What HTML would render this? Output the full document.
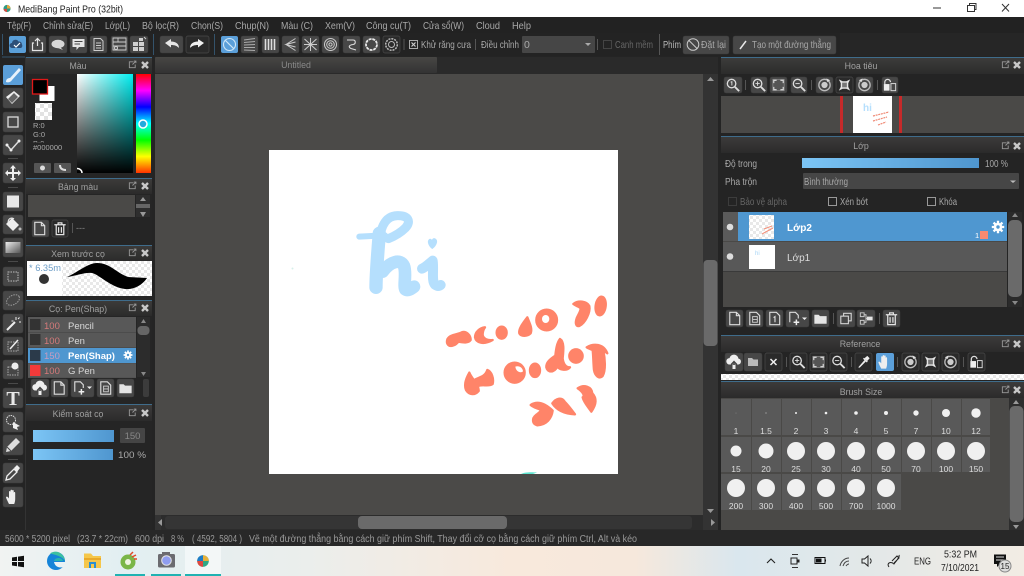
<!DOCTYPE html>
<html lang="vi"><head><meta charset="utf-8"><title>MediBang Paint Pro</title>
<style>
html,body{margin:0;padding:0;background:#222;width:1024px;height:576px;overflow:hidden}
svg{display:block;position:absolute;left:0;top:0;filter:blur(.35px)}
text{font-family:"Liberation Sans",sans-serif;font-size:9.5px;fill:#aaa}
.m{font-size:10.5px;fill:#a8a8a8}
.c{text-anchor:middle}
.h{font-size:8.8px;fill:#a0a0a0;text-anchor:middle}
.s{font-size:9.8px;fill:#9a9a9a}
.l{font-size:8.5px;fill:#ddd;text-anchor:middle}
.b{fill:#474747;stroke:#3a3a3a;stroke-width:.5}
.d{fill:#2a2a2a;stroke:#4a4a4a;stroke-width:.7}
.sep{stroke:#555;stroke-width:1}
.r{font-size:9.5px;fill:#c86f6f}
.n{font-size:9.5px;fill:#d8d8d8}
.k{fill:#222;font-size:9.5px}
</style></head><body>
<svg width="1024" height="576" viewBox="0 0 1024 576" xmlns="http://www.w3.org/2000/svg">
<defs>
<linearGradient id="hd" x1="0" y1="0" x2="0" y2="1"><stop offset="0" stop-color="#3c3b3a"/><stop offset="1" stop-color="#2b2b2b"/></linearGradient>
<linearGradient id="sl" x1="0" y1="0" x2="1" y2="0"><stop offset="0" stop-color="#7cc5f5"/><stop offset="1" stop-color="#4f96cf"/></linearGradient>
<linearGradient id="tab" x1="0" y1="0" x2="0" y2="1"><stop offset="0" stop-color="#474644"/><stop offset="1" stop-color="#333"/></linearGradient>
<linearGradient id="cs" x1="0" y1="0" x2="1" y2="0"><stop offset="0" stop-color="#fff"/><stop offset="1" stop-color="#00eef0"/></linearGradient>
<linearGradient id="cb" x1="0" y1="0" x2="0" y2="1"><stop offset="0" stop-color="#000" stop-opacity="0"/><stop offset="1" stop-color="#000"/></linearGradient>
<linearGradient id="hue" x1="0" y1="0" x2="0" y2="1"><stop offset="0" stop-color="#f00"/><stop offset=".167" stop-color="#f0f"/><stop offset=".333" stop-color="#00f"/><stop offset=".5" stop-color="#0ff"/><stop offset=".667" stop-color="#0f0"/><stop offset=".833" stop-color="#ff0"/><stop offset="1" stop-color="#f30"/></linearGradient>
<linearGradient id="tb" x1="0" y1="0" x2="1" y2="0"><stop offset="0" stop-color="#f1f3f2"/><stop offset=".12" stop-color="#e2eff2"/><stop offset=".3" stop-color="#ebeeec"/><stop offset=".5" stop-color="#f8e9dc"/><stop offset=".62" stop-color="#f6e8dc"/><stop offset=".72" stop-color="#dae7ee"/><stop offset=".85" stop-color="#e3e8e8"/><stop offset="1" stop-color="#f2ece4"/></linearGradient>
<linearGradient id="gr" x1="0" y1="0" x2="1" y2="1"><stop offset="0" stop-color="#eee"/><stop offset="1" stop-color="#555"/></linearGradient>
<pattern id="ck" width="8" height="8" patternUnits="userSpaceOnUse"><rect width="8" height="8" fill="#fff"/><rect width="4" height="4" fill="#e2e2e2"/><rect x="4" y="4" width="4" height="4" fill="#e2e2e2"/></pattern>
<pattern id="ck2" width="6" height="6" patternUnits="userSpaceOnUse"><rect width="6" height="6" fill="#fff"/><rect width="3" height="3" fill="#e8e8e8"/><rect x="3" y="3" width="3" height="3" fill="#e8e8e8"/></pattern>

<symbol id="pop" viewBox="0 0 10 10"><path d="M6 2H1.5V8.5H8V5M5 5L8.5 1.5M6.5 1.2H8.8V3.5" fill="none" stroke="#999" stroke-width="1"/></symbol>
<symbol id="x" viewBox="0 0 10 10"><path d="M2 2L8 8M8 2L2 8" stroke="#c8c8c8" stroke-width="2.4"/></symbol>
<symbol id="gear" viewBox="0 0 18 18"><path d="M9 1v16M1 9h16M3.3 3.3l11.4 11.4M14.7 3.3L3.3 14.7" stroke="#fff" stroke-width="3"/><circle cx="9" cy="9" r="5.5" fill="#fff"/><circle cx="9" cy="9" r="2.2" fill="#4f97d0"/></symbol>
<symbol id="new" viewBox="0 0 18 18"><path d="M4 2.5H11L14.5 6V15.5H4z M11 2.5V6H14.5" fill="none" stroke="#ddd" stroke-width="1.2"/></symbol>
<symbol id="new8" viewBox="0 0 18 18"><path d="M4 2.5H11L14.5 6V15.5H4z" fill="none" stroke="#ddd" stroke-width="1.2"/><rect x="7" y="7" width="5" height="6" fill="none" stroke="#ccc" stroke-width="1"/><path d="M7 10h5" stroke="#ccc"/></symbol>
<symbol id="new1" viewBox="0 0 18 18"><path d="M4 2.5H11L14.5 6V15.5H4z" fill="none" stroke="#ddd" stroke-width="1.2"/><path d="M8 8L9.5 7V13" fill="none" stroke="#ddd" stroke-width="1.2"/></symbol>
<symbol id="newp" viewBox="0 0 18 18"><path d="M4 13V2.5H10L13 5.5V9" fill="none" stroke="#ddd" stroke-width="1.2"/><path d="M11 10V16M8 13H14" stroke="#eee" stroke-width="1.6"/></symbol>
<symbol id="dir" viewBox="0 0 18 18"><path d="M2.5 5H7L8.5 6.5H15.5V14.5H2.5z" fill="#e4e4e4"/></symbol>
<symbol id="tr" viewBox="0 0 18 18"><path d="M3 5H15M7 5V3H11V5M5 5V15.5H13V5M7.5 7.5V13.5M10.5 7.5V13.5" fill="none" stroke="#e4e4e4" stroke-width="1.3"/></symbol>
<symbol id="dup" viewBox="0 0 18 18"><rect x="6.5" y="3.5" width="8" height="8" fill="none" stroke="#ddd" stroke-width="1.1"/><rect x="3.5" y="6.5" width="8" height="8" fill="#474747" stroke="#ddd" stroke-width="1.1"/></symbol>
<symbol id="mrg" viewBox="0 0 18 18"><path d="M3 3h4v4H3zM3 11h4v4H3z" fill="none" stroke="#ccc"/><path d="M7 5h2v8H7M9 9h1" fill="none" stroke="#ccc"/><rect x="10" y="7" width="6" height="4" fill="#e4e4e4"/></symbol>
<symbol id="cloudup" viewBox="0 0 18 18"><path d="M4.5 11.5a3.2 3.2 0 0 1 0-6.4 4.6 4.6 0 0 1 9 .5 3 3 0 0 1 0 5.9z" fill="#eee"/><path d="M9 16V9M6.2 11.5L9 8.5 11.8 11.5" fill="none" stroke="#444" stroke-width="1.4"/><path d="M7.5 12h3v4h-3z" fill="#eee"/></symbol>
<symbol id="zi" viewBox="0 0 18 18"><circle cx="7.5" cy="7.5" r="4.5" fill="none" stroke="#ddd" stroke-width="1.4"/><path d="M11 11L15.5 15.5" stroke="#ddd" stroke-width="2"/><path d="M5.2 7.5h4.6M7.5 5.2v4.6" stroke="#ddd"/></symbol>
<symbol id="zo" viewBox="0 0 18 18"><circle cx="7.5" cy="7.5" r="4.5" fill="none" stroke="#ddd" stroke-width="1.4"/><path d="M11 11L15.5 15.5" stroke="#ddd" stroke-width="2"/><path d="M5.2 7.5h4.6" stroke="#ddd"/></symbol>
<symbol id="z1" viewBox="0 0 18 18"><circle cx="7.5" cy="7.5" r="4.5" fill="none" stroke="#ddd" stroke-width="1.4"/><path d="M11 11L15.5 15.5" stroke="#ddd" stroke-width="2"/><path d="M6.5 6L7.8 5.5V9.5" fill="none" stroke="#ddd"/></symbol>
<symbol id="fit" viewBox="0 0 18 18"><rect x="3" y="3" width="12" height="12" fill="#555" stroke="#888" stroke-width=".8"/><path d="M4 7V4H7M11 4H14V7M14 11V14H11M7 14H4V11" fill="none" stroke="#ddd" stroke-width="1.2"/></symbol>
<symbol id="fit2" viewBox="0 0 18 18"><path d="M3 3L7 5H11L15 3L13 7V11L15 15L11 13H7L3 15L5 11V7z" fill="#e4e4e4"/><rect x="6.5" y="6.5" width="5" height="5" fill="#777"/></symbol>
<symbol id="rl" viewBox="0 0 18 18"><circle cx="9" cy="9" r="6" fill="none" stroke="#bbb" stroke-width="1.4"/><circle cx="9" cy="9" r="3.3" fill="#ccc"/><path d="M11 2L15 4 12 6" fill="#ddd"/></symbol>
<symbol id="rr" viewBox="0 0 18 18"><circle cx="9" cy="9" r="6" fill="none" stroke="#bbb" stroke-width="1.4"/><circle cx="9" cy="9" r="3.3" fill="#ccc"/><path d="M7 2L3 4 6 6" fill="#ddd"/></symbol>
<symbol id="lock" viewBox="0 0 18 18"><path d="M3.5 8V6a3 3 0 0 1 6 0" fill="none" stroke="#ddd" stroke-width="1.3"/><rect x="2.5" y="8" width="6" height="7" fill="#eee"/><rect x="10" y="7.5" width="5" height="7.5" fill="none" stroke="#ddd"/></symbol>
<symbol id="drop" viewBox="0 0 18 18"><path d="M4 15L3.5 14.5 10 7 11.5 8.5 5 15z" fill="#eee"/><path d="M10 5L13 2.5 15.5 5 13 8z" fill="#eee"/><path d="M9 5L13 9" stroke="#eee" stroke-width="1.4"/></symbol>
<symbol id="hand" viewBox="0 0 18 18"><path d="M5 16C3 12 2 10 2 9c1-1 2 0 3 1.5V4c0-1.4 1.5-1.4 1.5 0V8V2.7c0-1.3 1.6-1.3 1.6 0V8V3c0-1.3 1.6-1.3 1.6 0V8.5V5c0-1.3 1.5-1.3 1.5 0V11c0 2-.5 3.5-1 5z" fill="#eee"/></symbol>
</defs>

<!-- base -->
<rect width="1024" height="576" fill="#242424"/>
<rect width="1024" height="17" fill="#fff"/>
<rect y="17" width="1024" height="16" fill="#222"/>
<rect y="33" width="1024" height="23" fill="#262626"/>
<rect x="0" y="33" width="840" height="23" fill="#232323"/>

<!-- title bar -->
<circle cx="7" cy="8.5" r="3.6" fill="#2f9b86"/><path d="M7 5a3.6 3.6 0 0 1 3.5 3.5H7z" fill="#e9a63a"/><path d="M3.5 9A3.6 3.6 0 0 0 7 12V9z" fill="#d9483f"/>
<text x="18" y="12.5" class="k" style="font-size:10.5px" textLength="105" lengthAdjust="spacingAndGlyphs">MediBang Paint Pro (32bit)</text>
<path d="M933 8H941" stroke="#333"/>
<path d="M967.5 5.5H974.5V11.5H967.5zM969.5 5.5V3.5H976V9.5H974.5" fill="none" stroke="#333"/>
<path d="M1002 4L1009 11.5M1009 4L1002 11.5" stroke="#333"/>

<!-- menu -->
<text class="m" x="7" y="29" textLength="24" lengthAdjust="spacingAndGlyphs">Tệp(F)</text>
<text class="m" x="43" y="29" textLength="50" lengthAdjust="spacingAndGlyphs">Chỉnh sửa(E)</text>
<text class="m" x="105" y="29" textLength="25" lengthAdjust="spacingAndGlyphs">Lớp(L)</text>
<text class="m" x="142" y="29" textLength="37" lengthAdjust="spacingAndGlyphs">Bộ lọc(R)</text>
<text class="m" x="191" y="29" textLength="32" lengthAdjust="spacingAndGlyphs">Chọn(S)</text>
<text class="m" x="235" y="29" textLength="34" lengthAdjust="spacingAndGlyphs">Chụp(N)</text>
<text class="m" x="281" y="29" textLength="32" lengthAdjust="spacingAndGlyphs">Màu (C)</text>
<text class="m" x="325" y="29" textLength="30" lengthAdjust="spacingAndGlyphs">Xem(V)</text>
<text class="m" x="366" y="29" textLength="45" lengthAdjust="spacingAndGlyphs">Công cụ(T)</text>
<text class="m" x="423" y="29" textLength="41" lengthAdjust="spacingAndGlyphs">Cửa sổ(W)</text>
<text class="m" x="476" y="29" textLength="24" lengthAdjust="spacingAndGlyphs">Cloud</text>
<text class="m" x="512" y="29" textLength="19" lengthAdjust="spacingAndGlyphs">Help</text>

<!-- toolbar -->
<path d="M2.5 34V55M153.5 34V55M214.5 34V55" stroke="#34536b"/>
<rect x="9" y="36" width="17" height="17" rx="2" fill="#5a9fd8"/>
<path d="M12 48a2.5 2.5 0 0 1 0-5 3.5 3.5 0 0 1 6.5-1.5 3 3 0 0 1 3.5 3 2.5 2.5 0 0 1-1 3.5z" fill="#2d4f78"/><path d="M14 45l2 2 4-4" fill="none" stroke="#fff" stroke-width="1.2"/>
<rect class="b" x="29" y="36" width="17" height="17" rx="2"/><path d="M34 43H32.5V50.5H42.5V43H41M37.5 46V39M35 41L37.5 38.5 40 41" fill="none" stroke="#e4e4e4" stroke-width="1.2"/>
<rect class="b" x="49" y="36" width="18" height="17" rx="2"/><ellipse cx="58" cy="44" rx="6.5" ry="4.2" fill="#d8d8d8"/><path d="M60 47L63 50 58 48z" fill="#d8d8d8"/>
<rect class="b" x="70" y="36" width="17" height="17" rx="2"/><path d="M72.5 39H84.5V47H79L76.5 50V47H72.5z" fill="#e4e4e4"/><path d="M74.5 41.5H82.5M74.5 44H80" stroke="#444"/>
<rect class="b" x="90" y="36" width="17" height="17" rx="2"/><path d="M94 38.5H100.5L103 41V50.5H94zM96 43H101M96 45.5H101M96 48H101" fill="none" stroke="#ccc"/>
<rect class="b" x="111" y="36" width="17" height="17" rx="2"/><path d="M113 38H126V50H113zM113 42H126M113 46H126M118 38V42" fill="none" stroke="#ccc" stroke-width=".9"/><circle cx="116" cy="48" r="1.5" fill="none" stroke="#ccc"/>
<rect class="b" x="130" y="36" width="18" height="17" rx="2"/><path d="M133 42H138V46H133zM139 42H144V46H139zM133 47H138V51H133zM139 47H144V51H139zM139 38H143V41H139z" fill="#d0d0d0"/><path d="M144 37L146 39" stroke="#ccc"/>
<rect class="b" x="160" y="36" width="23" height="17" rx="2"/><path d="M165 43L171 39V41.5C176 41.5 179 44 179 48C177 46 175 45 171 45V47.5z" fill="#e6e6e6"/>
<rect class="d" x="186" y="36" width="23" height="17" rx="2"/><path d="M204 43L198 39V41.5C193 41.5 190 44 190 48C192 46 194 45 198 45V47.5z" fill="#f0f0f0"/>
<rect x="221" y="36" width="17" height="17" rx="2" fill="#5b9fd9"/><circle cx="229.5" cy="44.5" r="6" fill="none" stroke="#cfe6f7" stroke-width="1.1"/><path d="M225.3 40.3L233.7 48.7" stroke="#cfe6f7" stroke-width="1.1"/>
<rect class="b" x="241" y="36" width="17" height="17" rx="2"/><path d="M244 40L255 38.5M244 42.5L255 41.5M244 45L255 44.5M244 47.5L255 47.5M244 50L255 50.5" stroke="#aaa" stroke-width="1.1"/>
<rect class="b" x="262" y="36" width="17" height="17" rx="2"/><path d="M265.5 39V50M268.5 39V50M271.5 39V50M274.5 39V50" stroke="#ddd" stroke-width="1.6"/>
<rect class="b" x="282" y="36" width="17" height="17" rx="2"/><path d="M295.5 38.5L286 44.5 295.5 50.5M295.5 42L286 44.5 295.5 47" fill="none" stroke="#ccc"/>
<rect class="b" x="302" y="36" width="17" height="17" rx="2"/><path d="M304.5 39L316.5 50M316.5 39L304.5 50M310.5 38V51M304 44.5H317" stroke="#ccc"/>
<rect class="b" x="322" y="36" width="17" height="17" rx="2"/><circle cx="330.5" cy="44.5" r="6" fill="none" stroke="#ccc"/><circle cx="330.5" cy="44.5" r="3.8" fill="none" stroke="#ccc"/><circle cx="330.5" cy="44.5" r="1.6" fill="none" stroke="#ccc"/>
<rect class="b" x="343" y="36" width="17" height="17" rx="2"/><path d="M347 40H353C356 40 356 44 353 44.5C349 45 348 47 351 48.5L356 50" fill="none" stroke="#ddd" stroke-width="1.1"/>
<rect class="b" x="363" y="36" width="17" height="17" rx="2"/><circle cx="371.5" cy="44.5" r="5.5" fill="none" stroke="#e8e8e8" stroke-width="1.8" stroke-dasharray="3 .8"/>
<rect class="d" x="383" y="36" width="17" height="17" rx="2"/><circle cx="391.5" cy="44.5" r="5.8" fill="none" stroke="#bbb" stroke-width="1.5" stroke-dasharray="2 1"/><circle cx="391.5" cy="44.5" r="3" fill="none" stroke="#bbb"/>
<path class="sep" d="M404 39V50M475.5 39V50M597.5 39V50M659.5 34V55" />
<rect x="409.5" y="40.5" width="8" height="8" fill="none" stroke="#aaa"/><path d="M411.5 42.5L415.5 46.5M415.5 42.5L411.5 46.5" stroke="#ccc" stroke-width="1.2"/>
<text class="m" x="421" y="48" textLength="50" lengthAdjust="spacingAndGlyphs">Khử răng cưa</text>
<text class="m" x="481" y="48" textLength="38" lengthAdjust="spacingAndGlyphs">Điều chỉnh</text>
<rect x="522" y="36" width="73" height="17" rx="1" fill="#464646"/><text class="m" x="524" y="48">0</text><path d="M585 43H591L588 46z" fill="#aaa"/>
<rect x="603.5" y="40.5" width="8" height="8" fill="none" stroke="#444"/>
<text class="m" x="615" y="48" textLength="38" lengthAdjust="spacingAndGlyphs" style="fill:#666">Canh mềm</text>
<text class="m" x="663" y="48" textLength="18" lengthAdjust="spacingAndGlyphs" style="fill:#bbb">Phím</text>
<rect class="b" x="683" y="36" width="46" height="18" rx="2"/><circle cx="693" cy="44.5" r="5.8" fill="none" stroke="#ccc"/><path d="M689 40.5L697 48.5" stroke="#ccc"/>
<text class="m" x="701" y="48" textLength="25" lengthAdjust="spacingAndGlyphs">Đặt lại</text>
<rect class="b" x="733" y="36" width="103" height="18" rx="2"/><path d="M740 49L746 41" stroke="#e8e8e8" stroke-width="1.5"/>
<text class="m" x="752" y="48" textLength="79" lengthAdjust="spacingAndGlyphs">Tạo một đường thẳng</text>

<!-- left tools -->
<path d="M25.5 57V530" stroke="#333"/>
<path d="M2 57H25" stroke="#34536b"/>
<rect x="3" y="65" width="20" height="20" rx="2" fill="#5b9fd9"/><path d="M6 82C6 79 8 78 10 78L19 68 21 70 12 80C11 82 8 83 6 82z" fill="#e8f2fb"/>
<rect class="b" x="3" y="88" width="20" height="20" rx="2"/><path d="M6 97L14 91 20 96 12 104z" fill="#eee"/><path d="M8 99L12 103 18 97 14 93" fill="#666"/>
<rect class="b" x="3" y="112" width="20" height="20" rx="2"/><rect x="8" y="117" width="10" height="10" fill="none" stroke="#ddd" stroke-width="1.3"/>
<rect class="b" x="3" y="135" width="20" height="20" rx="2"/><path d="M7 145L11 150 19 141" fill="none" stroke="#ddd" stroke-width="1.5"/><circle cx="7" cy="145" r="1.5" fill="#eee"/><circle cx="19" cy="141" r="1.5" fill="#eee"/><circle cx="11" cy="150" r="1.5" fill="#eee"/>
<rect class="b" x="3" y="163" width="20" height="20" rx="2"/><path d="M13 165L16 168.5H14V172H18V170L21 173 18 176V174H14V178H16L13 181 10 178H12V174H8V176L5 173 8 170V172H12V168.5H10z" fill="#eee"/>
<path d="M8 158.5H18M8 187.5H18M8 261.5H18M8 383.5H18M8 459.5H18" stroke="#4a4a4a"/>
<rect class="b" x="3" y="192" width="20" height="19" rx="2"/><rect x="7" y="195.5" width="12" height="12" fill="#e8e8e8"/>
<rect class="b" x="3" y="215" width="20" height="19" rx="2"/><path d="M6 224L12 218 19 225 13 231z" fill="#eee"/><path d="M8 223C8 218 12 217 14 219" fill="none" stroke="#eee"/><circle cx="20" cy="229" r="1.5" fill="#bbb"/>
<rect class="b" x="3" y="238" width="20" height="19" rx="2"/><rect x="5.5" y="242" width="15" height="11" fill="url(#gr)"/>
<rect class="b" x="3" y="267" width="20" height="19" rx="2"/><rect x="8" y="272" width="10" height="9" fill="none" stroke="#bbb" stroke-dasharray="1.5 1"/>
<rect class="b" x="3" y="291" width="20" height="19" rx="2"/><ellipse cx="13" cy="300" rx="7" ry="4.5" transform="rotate(-30 13 300)" fill="none" stroke="#999" stroke-dasharray="1.5 1"/>
<rect class="b" x="3" y="314" width="20" height="19" rx="2"/><path d="M7 330L15 322" stroke="#eee" stroke-width="2"/><path d="M16 317V320M13.5 321H11.5M19 322H21M18 319L19.5 317.5" stroke="#eee"/>
<rect class="b" x="3" y="337" width="20" height="18" rx="2"/><rect x="8" y="342" width="10" height="9" fill="none" stroke="#aaa" stroke-dasharray="1.5 1"/><path d="M10 349L18 340" stroke="#eee" stroke-width="1.5"/>
<rect class="b" x="3" y="360" width="20" height="19" rx="2"/><rect x="8" y="367" width="10" height="8" fill="none" stroke="#aaa" stroke-dasharray="1.5 1"/><circle cx="15" cy="366" r="3.5" fill="#eee"/>
<rect class="b" x="3" y="388" width="20" height="20" rx="2"/><text x="13" y="405" class="c" style="font-family:'Liberation Serif',serif;font-weight:bold;font-size:20px;fill:#e8e8e8">T</text>
<rect class="b" x="3" y="412" width="20" height="20" rx="2"/><circle cx="11" cy="420" r="4.5" fill="none" stroke="#ddd" stroke-dasharray="1.5 .8"/><path d="M13 422L20 426 17 427 18 430 13 428z" fill="#eee"/>
<rect class="b" x="3" y="435" width="20" height="20" rx="2"/><path d="M6 452L7 447 16 438 20 442 11 451z" fill="#ddd"/><path d="M7 447L11 451" stroke="#444"/>
<rect class="b" x="3" y="463" width="20" height="20" rx="2"/><path d="M6 480L7 476 14 469 17 472 10 479z" fill="none" stroke="#eee" stroke-width="1.3"/><path d="M14 468L17 465 20 468 17 472z" fill="#eee"/>
<rect class="b" x="3" y="487" width="20" height="20" rx="2"/><use href="#hand" x="4" y="488" width="18" height="18"/>

<!-- left panels -->
<rect x="26" y="57" width="126" height="473" fill="#252525"/>
<path d="M26 57.5H152M26 178.5H152M26 245.5H152M26 300.5H152M26 404.5H152" stroke="#3f6c8b"/>
<rect x="26" y="58" width="126" height="16" fill="url(#hd)"/>
<rect x="26" y="179" width="126" height="15" fill="url(#hd)"/>
<rect x="26" y="246" width="126" height="15" fill="url(#hd)"/>
<rect x="26" y="301" width="126" height="15" fill="url(#hd)"/>
<rect x="26" y="405" width="126" height="16" fill="url(#hd)"/>
<text class="h" x="78" y="69">Màu</text>
<text class="h" x="78" y="190">Bảng màu</text>
<text class="h" x="78" y="257">Xem trước cọ</text>
<text class="h" x="78" y="312">Cọ: Pen(Shap)</text>
<text class="h" x="78" y="417">Kiểm soát cọ</text>
<use href="#pop" x="128" y="60" width="9" height="9"/><use href="#x" x="140" y="60" width="10" height="10"/>
<use href="#pop" x="128" y="181" width="9" height="9"/><use href="#x" x="140" y="181" width="10" height="10"/>
<use href="#pop" x="128" y="248" width="9" height="9"/><use href="#x" x="140" y="248" width="10" height="10"/>
<use href="#pop" x="128" y="303" width="9" height="9"/><use href="#x" x="140" y="303" width="10" height="10"/>
<use href="#pop" x="128" y="408" width="9" height="9"/><use href="#x" x="140" y="408" width="10" height="10"/>

<!-- colour -->
<rect x="39.5" y="86" width="15" height="15" fill="#fff"/>
<rect x="32.5" y="79.5" width="15" height="14.5" fill="#000" stroke="#e01818" stroke-width="1.3"/>
<rect x="35" y="103" width="17" height="17" fill="url(#ck)"/>
<text x="33" y="128" style="font-size:7.5px;fill:#aaa">R:0</text>
<text x="33" y="137" style="font-size:7.5px;fill:#aaa">G:0</text>
<text x="33" y="146" style="font-size:7.5px;fill:#aaa">B:0</text>
<rect x="30" y="142.5" width="44" height="8" fill="#252525"/>
<text x="33" y="150" style="font-size:7.5px;fill:#aaa">#000000</text>
<rect x="77" y="74" width="56" height="99" fill="url(#cs)"/><rect x="77" y="74" width="56" height="99" fill="url(#cb)"/>
<rect x="136" y="74" width="15" height="99" fill="url(#hue)"/>
<circle cx="143" cy="124" r="4" fill="#2ad" stroke="#fff" stroke-width="1.5"/>
<path d="M77 168.5C80 168.5 82 170.5 82 173" fill="none" stroke="#fff" stroke-width="1.5"/>
<rect x="34" y="163" width="17" height="10" rx="1" fill="#555"/><circle cx="42.5" cy="168" r="2.5" fill="#ddd"/>
<rect x="54" y="163" width="17" height="10" rx="1" fill="#555"/><path d="M60 165C60 169 63 170 66 170" fill="none" stroke="#ddd" stroke-width="2"/>

<!-- palette -->
<rect x="28" y="195" width="107" height="22" fill="#4a4947"/>
<rect x="136" y="195" width="14" height="22" fill="#2e2e2e"/><path d="M143 197L146 201H140zM143 217L146 212H140z" fill="#999"/><rect x="136" y="204" width="14" height="4" fill="#666"/>
<rect class="b" x="32" y="220" width="17" height="17" rx="2"/><use href="#new" x="31" y="220" width="17" height="17"/>
<rect class="d" x="52" y="220" width="16" height="17" rx="2"/><use href="#tr" x="51.5" y="220" width="17" height="17"/>
<path d="M72.5 223V233" stroke="#555"/><text x="76" y="231" style="font-size:9px;fill:#888">---</text>

<!-- preview -->
<rect x="27" y="261" width="125" height="35" fill="url(#ck2)"/>
<rect x="27" y="261" width="35" height="35" fill="#fff"/>
<text x="29" y="271" style="font-size:9px;fill:#6d9dc6" textLength="32" lengthAdjust="spacingAndGlyphs">* 6.35m</text>
<circle cx="44" cy="279" r="5" fill="#333"/>
<path d="M67 277C78 272 88 263 97 263C110 263 115 272 128 277L147 278C143 284 135 290 125 289C110 287 100 275 92 273C85 272 75 276 67 277z" fill="#000"/>

<!-- brushes -->
<rect x="28" y="317" width="108" height="61" fill="#4c4c4c"/>
<rect x="28" y="317" width="108" height="15" fill="#585858"/><rect x="28" y="333" width="108" height="14" fill="#585858"/>
<rect x="28" y="348" width="108" height="15" fill="#4f97d0"/><rect x="28" y="363.5" width="108" height="14" fill="#585858"/>
<rect x="30" y="319" width="10.5" height="11" fill="#333"/><rect x="30" y="334" width="10.5" height="11" fill="#333"/><rect x="30" y="350" width="10.5" height="11" fill="#2b3a4a"/><rect x="30" y="365" width="10.5" height="11" fill="#f23a3a"/>
<text class="r" x="44" y="329" style="fill:#d57a7a">100</text><text class="r" x="44" y="344" style="fill:#d57a7a">100</text><text class="r" x="44" y="359" style="fill:#c89cc0">150</text><text class="r" x="44" y="374" style="fill:#d57a7a">100</text>
<text class="n" x="68" y="329">Pencil</text><text class="n" x="68" y="344">Pen</text><text class="n" x="68" y="359" style="font-weight:bold;fill:#fff">Pen(Shap)</text><text class="n" x="68" y="374">G Pen</text>
<use href="#gear" x="123" y="350" width="10" height="10"/>
<rect x="137" y="317" width="13" height="60" fill="#2c2c2c"/><path d="M143.5 319L146 323H141z" fill="#888"/><rect x="137.5" y="326" width="12" height="9" rx="4" fill="#666"/><path d="M143.5 376L146 372H141z" fill="#888"/>
<rect class="b" x="31" y="379" width="18" height="18" rx="2"/><use href="#cloudup" x="31" y="379" width="18" height="18"/>
<rect class="b" x="51" y="379" width="17" height="18" rx="2"/><use href="#new" x="50.5" y="379.5" width="17" height="17"/>
<rect class="b" x="71" y="379" width="23" height="18" rx="2"/><use href="#newp" x="71" y="379.5" width="17" height="17"/><path d="M87 386.5H92L89.5 389z" fill="#eee"/>
<rect class="b" x="97" y="379" width="17" height="18" rx="2"/><use href="#new8" x="97" y="379.5" width="17" height="17"/>
<rect class="b" x="117" y="379" width="17" height="18" rx="2"/><use href="#dir" x="117" y="379.5" width="17" height="17"/>
<rect x="143" y="379" width="6" height="18" rx="2" fill="#3c3c3c"/>

<!-- control -->
<rect x="33" y="430" width="81" height="12" fill="url(#sl)"/>
<rect x="33" y="449" width="80" height="11" fill="url(#sl)"/>
<rect x="120" y="428" width="25" height="15" rx="1" fill="#454545"/><text x="132.5" y="439" class="c" style="fill:#888;font-size:9.5px">150</text>
<text x="118" y="458" style="fill:#aaa;font-size:9.5px" textLength="28" lengthAdjust="spacingAndGlyphs">100 %</text>

<!-- canvas area -->
<rect x="155" y="57" width="563" height="17" fill="#2a2a2a"/>
<rect x="155" y="57" width="282" height="16" rx="1" fill="url(#tab)"/>
<text x="296" y="68" class="h" style="fill:#8a8a8a">Untitled</text>
<rect x="155" y="74" width="548" height="441" fill="#4b4a48"/>
<rect x="703" y="74" width="15" height="441" fill="#333"/>
<path d="M710.5 77L714 81H707zM710.5 513L714 509H707z" fill="#999"/>
<rect x="703.5" y="260" width="14" height="86" rx="4" fill="#6a6a6a"/>
<rect x="155" y="515" width="563" height="15" fill="#2c2c2c"/><rect x="155" y="515" width="6" height="15" fill="#333"/>
<path d="M158 522.5L162 519V526z" fill="#999"/>
<rect x="165" y="516" width="527" height="13" rx="3" fill="#353535"/>
<rect x="358" y="516" width="149" height="13" rx="4" fill="#6a6a6a"/>
<rect x="703" y="515" width="15" height="15" fill="#333"/>
<path d="M715 522.5L711 519V526z" fill="#999"/>
<rect x="269" y="150" width="349" height="324" fill="#fff"/>

<!-- hi -->
<g transform="translate(340 190) scale(.3333)" fill="none" stroke="#b5dffd" stroke-linecap="round" stroke-linejoin="round">
<path d="M58 140L135 136" stroke-width="18"/>
<path d="M118 130C114 180 108 250 108 292" stroke-width="40"/>
<path d="M118 150C124 100 142 78 172 77C205 76 214 94 197 113C182 128 165 138 145 146" stroke-width="27"/>
<path d="M128 245C150 215 182 205 192 228C200 250 190 285 196 298C204 304 214 296 222 290" stroke-width="38"/>
<path d="M246 236C256 232 266 222 278 212C282 240 274 272 285 284C293 290 298 288 302 285" stroke-width="30"/>
<path d="M268 148C260 155 268 170 277 176C288 168 296 152 285 146C280 144 277 148 276 152C274 148 272 146 268 148z" fill="#b5dffd" stroke-width="2"/>
</g>
<circle cx="292.5" cy="268.5" r="1" fill="#d6f0ea"/>

<!-- writing -->
<g transform="translate(430 290) scale(.3333)" fill="#ff8469" stroke="#ff8469" stroke-width="7" stroke-linejoin="round">
<path d="M52 148C60 132 85 134 95 127C108 122 122 135 122 150C115 160 100 158 85 155C78 165 62 172 55 165C50 160 50 154 52 148z"/>
<path d="M165 112C150 114 135 125 135 142C138 158 160 166 188 150C172 152 160 146 158 135C158 125 160 118 165 112z"/>
<ellipse cx="215" cy="128" rx="15" ry="18"/>
<path d="M292 82C278 100 265 118 268 130C272 140 292 140 302 130C308 115 298 98 292 82z"/>
<circle cx="350" cy="90" r="31"/><ellipse cx="347" cy="87" rx="11" ry="12" fill="#fff" stroke="none"/>
<path d="M430 42C445 30 470 33 478 48C482 68 465 100 448 108C438 110 435 100 440 85C445 72 452 65 452 55C448 50 438 48 430 42z"/>
<ellipse cx="512" cy="48" rx="15" ry="28" transform="rotate(8 512 48)"/>
<path d="M118 248C124 265 148 285 146 303C135 316 118 316 108 300C102 285 108 265 118 248z"/>
<path d="M133 270C145 262 165 262 172 240C185 245 192 265 188 282C175 292 155 280 142 290C135 288 130 280 133 270z"/>
<circle cx="254" cy="248" r="30"/><path d="M256 230C266 226 278 232 279 244C272 250 258 246 256 230z" fill="#fff" stroke="none"/>
<ellipse cx="315" cy="241" rx="15" ry="20"/>
<path d="M390 147C404 155 400 185 398 205C400 222 408 232 420 232C408 245 388 238 382 230C372 250 352 248 349 232C348 215 365 205 376 197C378 180 380 160 390 147z"/>
<circle cx="438" cy="198" r="20"/>
<path d="M470 172C490 160 520 160 532 190C525 185 522 182 520 182C525 205 528 240 518 258C508 268 495 258 492 240C490 220 490 195 488 180C482 178 476 176 470 172z"/>
<path d="M302 345C325 330 350 345 368 362C365 385 350 405 322 406C306 402 305 385 318 375C328 368 335 362 330 358C320 355 310 352 302 345z"/>
<path d="M367 340C378 325 395 320 404 335C414 345 424 358 435 373C415 372 385 368 367 340z"/>
<path d="M443 295C462 282 485 290 487 310C498 322 502 340 484 365C474 350 462 338 458 322C466 318 458 305 443 295z"/>
</g>
<path d="M521 474C524 472 532 472 537 472.5L533 474z" fill="#5fe5d0"/>

<!-- navigator -->
<rect x="721" y="57" width="303" height="473" fill="#242424"/>
<path d="M721 57.5H1024M721 136.5H1024M721 335.5H1024M721 381.5H1024" stroke="#3f6c8b"/>
<rect x="721" y="58" width="303" height="16" fill="url(#hd)"/>
<rect x="721" y="137" width="303" height="16" fill="url(#hd)"/>
<rect x="721" y="336" width="303" height="16" fill="url(#hd)"/>
<rect x="721" y="382" width="303" height="16" fill="url(#hd)"/>
<text class="h" x="861" y="69">Hoa tiêu</text>
<text class="h" x="861" y="149">Lớp</text>
<text class="h" x="860" y="347">Reference</text>
<text class="h" x="861" y="395">Brush Size</text>
<use href="#pop" x="1001" y="60" width="9" height="9"/><use href="#x" x="1012" y="60" width="10" height="10"/>
<use href="#pop" x="1001" y="141" width="9" height="9"/><use href="#x" x="1012" y="141" width="10" height="10"/>
<use href="#pop" x="1001" y="339" width="9" height="9"/><use href="#x" x="1012" y="339" width="10" height="10"/>
<use href="#pop" x="1001" y="385" width="9" height="9"/><use href="#x" x="1012" y="385" width="10" height="10"/>
<rect class="b" x="724" y="77" width="18" height="16" rx="2"/><use href="#z1" x="724.5" y="76.5" width="17" height="17"/>
<path class="sep" d="M745.5 80V90M811.5 80V90M877.5 80V90"/>
<rect class="b" x="751" y="77" width="16" height="16" rx="2"/><use href="#zi" x="750.5" y="76.5" width="17" height="17"/>
<rect class="b" x="770" y="77" width="17" height="16" rx="2"/><use href="#fit" x="770" y="76.5" width="17" height="17"/>
<rect class="b" x="791" y="77" width="16" height="16" rx="2"/><use href="#zo" x="790.5" y="76.5" width="17" height="17"/>
<rect class="b" x="816" y="77" width="17" height="16" rx="2"/><use href="#rl" x="816" y="76.5" width="17" height="17"/>
<rect class="d" x="836" y="77" width="17" height="16" rx="2"/><use href="#fit2" x="836" y="76.5" width="17" height="17"/>
<rect class="b" x="856" y="77" width="17" height="16" rx="2"/><use href="#rr" x="856" y="76.5" width="17" height="17"/>
<rect class="b" x="882" y="77" width="16" height="16" rx="2"/><use href="#lock" x="881.5" y="76.5" width="17" height="17"/>
<rect x="721" y="96" width="303" height="37" fill="#4a4947"/>
<rect x="853" y="96" width="39" height="37" fill="#fff"/>
<rect x="840" y="96" width="3" height="37" fill="#c62a2a"/><rect x="899" y="96" width="3" height="37" fill="#c62a2a"/>
<text x="863" y="111" style="font-size:10px;font-weight:bold;fill:#b5dffd">hi</text>
<path d="M873 116L889 112M873 121L887 117M878 125L886 122" stroke="#f08a75" stroke-width="1.2" stroke-dasharray="2 .7"/>

<!-- layer -->
<text class="m" x="725" y="167" textLength="32" lengthAdjust="spacingAndGlyphs">Độ trong</text>
<rect x="802" y="158" width="177" height="10" fill="url(#sl)"/>
<text class="m" x="985" y="167" textLength="23" lengthAdjust="spacingAndGlyphs">100 %</text>
<text class="m" x="725" y="185" textLength="32" lengthAdjust="spacingAndGlyphs">Pha trộn</text>
<rect x="803" y="173" width="216" height="16" rx="1" fill="#464646"/>
<text class="m" x="804" y="185" textLength="44" lengthAdjust="spacingAndGlyphs">Bình thường</text><path d="M1010 180.5H1016L1013 183z" fill="#bbb"/>
<rect x="728.5" y="197.5" width="8" height="8" fill="none" stroke="#3c3c3c"/>
<text class="m" x="740" y="205" textLength="47" lengthAdjust="spacingAndGlyphs" style="fill:#666">Bảo vệ alpha</text>
<rect x="828.5" y="197.5" width="8" height="8" fill="none" stroke="#999"/>
<text class="m" x="840" y="205" textLength="28" lengthAdjust="spacingAndGlyphs">Xén bớt</text>
<rect x="927.5" y="197.5" width="8" height="8" fill="none" stroke="#999"/>
<text class="m" x="939" y="205" textLength="18" lengthAdjust="spacingAndGlyphs">Khóa</text>
<rect x="723" y="212" width="284" height="95" fill="#4a4947"/>
<rect x="723" y="212" width="15" height="29" fill="#5a5a5a"/><rect x="738" y="212" width="269" height="29" fill="#4f97d0"/>
<rect x="723" y="242" width="284" height="29" fill="#585858"/><rect x="723" y="271" width="284" height="1" fill="#3a3a3a"/>
<circle cx="730" cy="227" r="3.3" fill="#ddd"/><circle cx="730" cy="256.5" r="3.3" fill="#ddd"/>
<rect x="749" y="215" width="25" height="24" fill="url(#ck2)"/><path d="M762 234L773 228M764 229L772 226" stroke="#f3907a" stroke-width="1"/>
<rect x="749" y="245" width="26" height="24" fill="#fff"/><text x="755" y="255" style="font-size:6px;fill:#a9d6f7">hi</text>
<text x="787" y="231" style="font-weight:bold;font-size:10px;fill:#fff">Lớp2</text>
<text x="787" y="261" style="font-size:10px;fill:#ddd">Lớp1</text>
<text x="975" y="238" style="font-size:7.5px;fill:#fff">1</text><rect x="980" y="231" width="8" height="8" fill="#fa8a70"/>
<use href="#gear" x="991" y="220" width="14" height="14"/>
<rect x="1008" y="212" width="14" height="95" fill="#2a2a2a"/><path d="M1015 213L1018 217H1012zM1015 305L1018 301H1012z" fill="#888"/>
<rect x="1008" y="220" width="14" height="77" rx="5" fill="#6a6a6a"/>
<rect class="b" x="726" y="310" width="17" height="17" rx="2"/><use href="#new" x="726" y="310" width="17" height="17"/>
<rect class="b" x="746" y="310" width="17" height="17" rx="2"/><use href="#new8" x="746" y="310" width="17" height="17"/>
<rect class="b" x="766" y="310" width="17" height="17" rx="2"/><use href="#new1" x="766" y="310" width="17" height="17"/>
<rect class="b" x="786" y="310" width="23" height="17" rx="2"/><use href="#newp" x="786" y="310" width="17" height="17"/><path d="M802 317.5H807L804.5 320z" fill="#eee"/>
<rect class="b" x="812" y="310" width="17" height="17" rx="2"/><use href="#dir" x="812" y="310" width="17" height="17"/>
<path class="sep" d="M833.5 313V324M879.5 313V324"/>
<rect class="b" x="837" y="310" width="18" height="17" rx="2"/><use href="#dup" x="837.5" y="310" width="17" height="17"/>
<rect class="b" x="857" y="310" width="18" height="17" rx="2"/><use href="#mrg" x="857.5" y="310" width="17" height="17"/>
<rect class="b" x="883" y="310" width="17" height="17" rx="2"/><use href="#tr" x="883" y="310" width="17" height="17"/>

<!-- reference -->
<rect class="b" x="725" y="353" width="18" height="18" rx="2"/><use href="#cloudup" x="725" y="353" width="18" height="18"/>
<rect class="b" x="744" y="353" width="18" height="18" rx="2"/><path d="M748 358H752L753.5 359.5H758V366H748z" fill="#bbb"/>
<rect class="d" x="765" y="353" width="17" height="18" rx="2"/><path d="M770.5 359L776.5 365M776.5 359L770.5 365" stroke="#eee" stroke-width="1.5"/>
<path class="sep" d="M786.5 357V367M851.5 357V367M897.5 357V367M963.5 357V367"/>
<rect class="d" x="790" y="353" width="17" height="18" rx="2"/><use href="#zi" x="790" y="353.5" width="17" height="17"/>
<rect class="d" x="810" y="353" width="17" height="18" rx="2"/><use href="#fit" x="810" y="353.5" width="17" height="17"/>
<rect class="d" x="830" y="353" width="17" height="18" rx="2"/><use href="#zo" x="830" y="353.5" width="17" height="17"/>
<rect class="d" x="855" y="353" width="17" height="18" rx="2"/><use href="#drop" x="855" y="353.5" width="17" height="17"/>
<rect x="876" y="353" width="18" height="18" rx="2" fill="#5b9fd9"/><use href="#hand" x="876.5" y="353.5" width="17" height="17"/>
<rect class="d" x="902" y="353" width="17" height="18" rx="2"/><use href="#rl" x="902" y="353.5" width="17" height="17"/>
<rect class="d" x="922" y="353" width="17" height="18" rx="2"/><use href="#fit2" x="922" y="353.5" width="17" height="17"/>
<rect class="d" x="942" y="353" width="17" height="18" rx="2"/><use href="#rr" x="942" y="353.5" width="17" height="17"/>
<rect class="d" x="968" y="353" width="17" height="18" rx="2"/><use href="#lock" x="968" y="353.5" width="17" height="17"/>
<rect x="721" y="374" width="303" height="6" fill="url(#ck2)"/>

<!-- brush size -->
<rect x="721" y="398" width="303" height="133" fill="#4a4947"/>
<rect x="1009" y="398" width="15" height="133" fill="#2e2e2e"/><path d="M1016 400L1019 404H1013zM1016 529L1019 525H1013z" fill="#999"/><rect x="1009.5" y="406" width="14" height="116" rx="5" fill="#6a6a6a"/>
<g fill="#595959">
<rect x="721" y="399" width="30" height="36"/><rect x="752" y="399" width="29" height="36"/><rect x="782" y="399" width="29" height="36"/><rect x="812" y="399" width="29" height="36"/><rect x="842" y="399" width="29" height="36"/><rect x="872" y="399" width="29" height="36"/><rect x="902" y="399" width="29" height="36"/><rect x="932" y="399" width="29" height="36"/><rect x="962" y="399" width="28" height="36"/>
<rect x="721" y="437" width="30" height="35"/><rect x="752" y="437" width="29" height="35"/><rect x="782" y="437" width="29" height="35"/><rect x="812" y="437" width="29" height="35"/><rect x="842" y="437" width="29" height="35"/><rect x="872" y="437" width="29" height="35"/><rect x="902" y="437" width="29" height="35"/><rect x="932" y="437" width="29" height="35"/><rect x="962" y="437" width="28" height="35"/>
<rect x="721" y="474" width="30" height="36"/><rect x="752" y="474" width="29" height="36"/><rect x="782" y="474" width="29" height="36"/><rect x="812" y="474" width="29" height="36"/><rect x="842" y="474" width="29" height="36"/><rect x="872" y="474" width="29" height="36"/>
</g>
<g fill="#f0f0f0">
<circle cx="736" cy="413" r=".3"/><circle cx="766" cy="413" r=".5"/><circle cx="796" cy="413" r="1"/><circle cx="826" cy="413" r="1.3"/><circle cx="856" cy="413" r="1.8"/><circle cx="886" cy="413" r="2"/><circle cx="916" cy="413" r="2.7"/><circle cx="946" cy="413" r="4"/><circle cx="976" cy="413" r="4.7"/>
<circle cx="736" cy="451" r="5.5"/><circle cx="766" cy="451" r="7.5"/><circle cx="796" cy="451" r="9"/><circle cx="826" cy="451" r="9"/><circle cx="856" cy="451" r="9"/><circle cx="886" cy="451" r="9"/><circle cx="916" cy="451" r="9"/><circle cx="946" cy="451" r="9"/><circle cx="976" cy="451" r="9"/>
<circle cx="736" cy="488" r="9"/><circle cx="766" cy="488" r="9"/><circle cx="796" cy="488" r="9"/><circle cx="826" cy="488" r="9"/><circle cx="856" cy="488" r="9"/><circle cx="886" cy="488" r="9"/>
</g>
<text class="l" x="736" y="434">1</text><text class="l" x="766" y="434">1.5</text><text class="l" x="796" y="434">2</text><text class="l" x="826" y="434">3</text><text class="l" x="856" y="434">4</text><text class="l" x="886" y="434">5</text><text class="l" x="916" y="434">7</text><text class="l" x="946" y="434">10</text><text class="l" x="976" y="434">12</text>
<text class="l" x="736" y="472">15</text><text class="l" x="766" y="472">20</text><text class="l" x="796" y="472">25</text><text class="l" x="826" y="472">30</text><text class="l" x="856" y="472">40</text><text class="l" x="886" y="472">50</text><text class="l" x="916" y="472">70</text><text class="l" x="946" y="472">100</text><text class="l" x="976" y="472">150</text>
<text class="l" x="736" y="509">200</text><text class="l" x="766" y="509">300</text><text class="l" x="796" y="509">400</text><text class="l" x="826" y="509">500</text><text class="l" x="856" y="509">700</text><text class="l" x="886" y="509">1000</text>

<!-- status -->
<rect y="530" width="1024" height="16" fill="#282828"/>
<text class="s" x="5" y="542" textLength="65" lengthAdjust="spacingAndGlyphs">5600 * 5200 pixel</text>
<text class="s" x="77" y="542" textLength="51" lengthAdjust="spacingAndGlyphs">(23.7 * 22cm)</text>
<text class="s" x="135" y="542" textLength="29" lengthAdjust="spacingAndGlyphs">600 dpi</text>
<text class="s" x="171" y="542" textLength="13" lengthAdjust="spacingAndGlyphs">8 %</text>
<text class="s" x="192" y="542" textLength="50" lengthAdjust="spacingAndGlyphs">( 4592, 5804 )</text>
<text class="s" x="249" y="542" textLength="388" lengthAdjust="spacingAndGlyphs">Vẽ một đường thẳng bằng cách giữ phím Shift, Thay đổi cỡ cọ bằng cách giữ phím Ctrl, Alt và kéo</text>

<!-- taskbar -->
<rect y="546" width="1024" height="30" fill="url(#tb)"/>
<path d="M12 557.5L17 556.8V561H12zM18 556.6L24 555.7V561H18zM12 562H17V566.2L12 565.5zM18 562H24V567.3L18 566.4z" fill="#111"/>
<circle cx="56" cy="561" r="9" fill="#1584d8"/><path d="M50 553.5C56 549 64 553 65 561C62 556 56 555 50 553.5z" fill="#3cc0a0"/><path d="M54 561C55 557 62 557 63 561H54z" fill="#27b3b0"/><path d="M54 562C55 567 60 569 65 566C66 564 65 562 65 562z" fill="#e9f2f4"/>
<path d="M84 553.5H91L93 556H101V568H84z" fill="#f5c74b"/><path d="M84 558H101V560H84z" fill="#e9a92a"/><path d="M89 562H96V568H94V564H91V568H89z" fill="#2b8fd0"/>
<circle cx="128" cy="562" r="7.5" fill="#7ab648"/><circle cx="128" cy="562" r="3" fill="#eef4e2"/><path d="M130 555L133 552M132 557L136 555M134 559L137 559" stroke="#e04a2a" stroke-width="1.5"/>
<rect x="158" y="554" width="17" height="13.5" rx="1.5" fill="#6b6b70"/><rect x="162" y="552" width="8" height="3" fill="#6b6b70"/><circle cx="166.5" cy="560.5" r="4.8" fill="#8f9df0" stroke="#e4e4e4" stroke-width="1"/>
<rect x="185" y="546" width="36" height="30" fill="#fff" opacity=".5"/>
<circle cx="203" cy="561" r="5.8" fill="#2fa886"/><path d="M203 555.2a5.8 5.8 0 0 1 5.8 5.8H203z" fill="#e8b13a"/><path d="M197.2 561A5.8 5.8 0 0 0 203 566.8V561z" fill="#e0473f"/><path d="M203 561V555.2A5.8 5.8 0 0 0 197.2 561z" fill="#1e7cc8"/>
<rect x="115" y="574" width="30" height="2" fill="#20b2b2"/><rect x="151" y="574" width="30" height="2" fill="#20b2b2"/><rect x="185" y="574" width="36" height="2" fill="#20b2b2"/>
<path d="M767 563L771 559 775 563" fill="none" stroke="#222" stroke-width="1.1"/>
<path d="M792 554.5H798M792 567.5H798" stroke="#333"/><rect x="791" y="558" width="6" height="6" fill="none" stroke="#222"/><rect x="797" y="559.5" width="2.5" height="3" fill="#222"/>
<rect x="815" y="557.5" width="10" height="6" fill="none" stroke="#111"/><rect x="816" y="558.5" width="5.5" height="4" fill="#111"/><rect x="825" y="559.5" width="1" height="2" fill="#111"/>
<path d="M840 566C841 561 845 558 849 558M843 566C844 563 846 561 849 561M846 566C846.5 565 848 564 849 564" fill="none" stroke="#444"/>
<path d="M862 559H864.5L868 556V566L864.5 563H862zM870 558.5C871.5 560 871.5 562 870 563.5" fill="none" stroke="#222"/>
<path d="M889 567C886 563 891 561 894 564C897 560 900 557 899 555M892 561L897 556 899 558 894 563" fill="none" stroke="#222"/>
<text x="914" y="564.5" class="k" style="font-size:10.5px" textLength="17" lengthAdjust="spacingAndGlyphs">ENG</text>
<text x="944" y="557.5" class="k" style="font-size:10.5px" textLength="33" lengthAdjust="spacingAndGlyphs">5:32 PM</text>
<text x="941" y="571" class="k" style="font-size:10.5px" textLength="38" lengthAdjust="spacingAndGlyphs">7/10/2021</text>
<path d="M994 554.5H1006V564H1000L997 567V564H994z" fill="#111"/><path d="M996 557H1004M996 560H1004" stroke="#ddd"/>
<circle cx="1005" cy="566" r="6" fill="#ddd" stroke="#888"/>
<text x="1005" y="569" class="k c" style="font-size:8px">15</text>
</svg>
</body></html>
